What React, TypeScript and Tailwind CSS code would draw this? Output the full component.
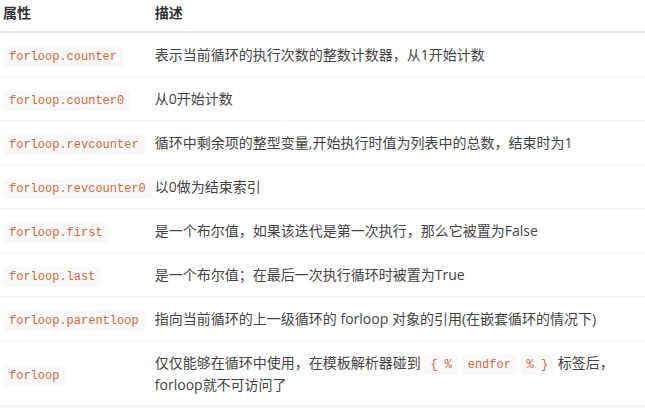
import React from "react";

const Code = ({ children }: { children: React.ReactNode }) => (
  <code className="bg-[#f8f8f8] text-[#d2693f] px-[6px] py-[3px] rounded-[2px] text-[12px] leading-[16px] [font-family:'Liberation_Mono','DejaVu_Sans_Mono',monospace]">
    {children}
  </code>
);

const rows: [string, React.ReactNode][] = [
  ["forloop.counter", "表示当前循环的执行次数的整数计数器，从1开始计数"],
  ["forloop.counter0", "从0开始计数"],
  ["forloop.revcounter", "循环中剩余项的整型变量,开始执行时值为列表中的总数，结束时为1"],
  ["forloop.revcounter0", "以0做为结束索引"],
  ["forloop.first", "是一个布尔值，如果该迭代是第一次执行，那么它被置为False"],
  ["forloop.last", "是一个布尔值；在最后一次执行循环时被置为True"],
  ["forloop.parentloop", "指向当前循环的上一级循环的 forloop 对象的引用(在嵌套循环的情况下)"],
  [
    "forloop",
    <>
      仅仅能够在循环中使用，在模板解析器碰到 <Code>{"{ %"}</Code> <Code>endfor</Code> <Code>{"% }"}</Code> 标签后，forloop就不可访问了
    </>,
  ],
];

export default function App() {
  return (
    <div className="w-[645px] h-[417px] bg-white text-[14px] leading-[22px] text-[#444] [font-family:'Open_Sans','Noto_Sans_CJK_SC',sans-serif]">
      <table className="w-full border-collapse">
        <thead>
          <tr className="border-b-2 border-[#ececec]">
            <th className="text-left font-bold text-[#333] pl-[3px] pt-[2px] pb-[7px] w-[150px]">属性</th>
            <th className="text-left font-bold text-[#333] pl-[3px] pt-[2px] pb-[7px]">描述</th>
          </tr>
        </thead>
        <tbody>
          {rows.map(([k, v], i) => (
            <tr key={i} className="border-b border-[#eeeeee]">
              <td className="pl-[3px] h-[44px] py-0 whitespace-nowrap align-middle">
                <Code>{k}</Code>
              </td>
              <td className="pl-[3px] pr-[4px] pt-[11px] pb-[10px] align-middle">
                <div className="leading-[22px]">{v}</div>
              </td>
            </tr>
          ))}
        </tbody>
      </table>
    </div>
  );
}
